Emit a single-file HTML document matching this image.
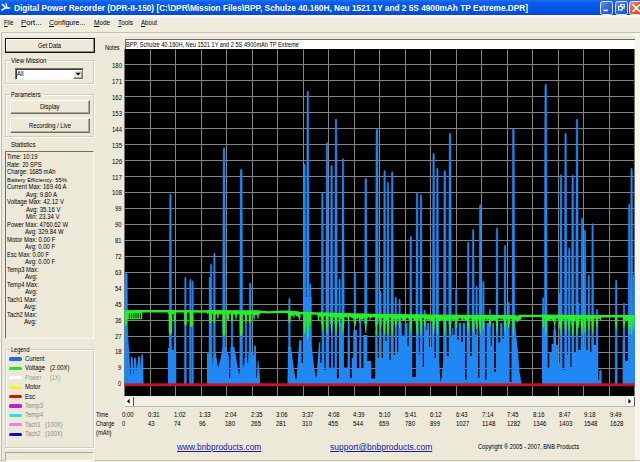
<!DOCTYPE html>
<html><head><meta charset="utf-8"><title>Digital Power Recorder</title>
<style>
html,body{margin:0;padding:0}
body{width:640px;height:462px;overflow:hidden;position:relative;background:#ece9d8;font-family:"Liberation Sans", sans-serif;}
.t{position:absolute;white-space:nowrap;line-height:1;transform-origin:0 50%;}
.abs{position:absolute;box-sizing:border-box}
.grp{position:absolute;box-sizing:border-box;border:1px solid #d0d0bf;box-shadow:inset 1px 1px 0 #fff, 1px 1px 0 #fff;}
.btn{position:absolute;box-sizing:border-box;background:#ece9d8;border:1px solid;border-color:#fff #716f64 #716f64 #fff;box-shadow:inset -1px -1px 0 #aca899;}
.sunk{position:absolute;box-sizing:border-box;border:1px solid;border-color:#716f64 #faf9f3 #faf9f3 #716f64;}
.lbl{background:#ece9d8;}

</style></head><body>
<div class="abs" style="left:0;top:0;width:640px;height:15.5px;background:linear-gradient(#2270f0 0%,#0a5ceb 18%,#0354e6 60%,#0350dc 82%,#0344c4 100%);"></div>
<svg class="abs" style="left:0;top:0" width="14" height="15" viewBox="0 0 14 15"><path d="M2.3 4.4 L5.8 7.7 M2 10 L5.8 7.7 L9.8 7.9 M6 3.8 L7 7.6" stroke="#fff" stroke-width="1.5" fill="none" stroke-linecap="round" stroke-linejoin="round"/></svg>
<span class="t" style="left:13.80px;top:4.27px;font-size:8.3px;color:#fff;transform:scaleX(0.9962);font-weight:bold;">Digital Power Recorder (DPR-II-150) [C:\DPR\Mission Files\BPP, Schulze 40.160H, Neu 1521 1Y and 2 5S 4900mAh TP Extreme.DPR]</span>
<div class="abs" style="left:600.3px;top:1.2px;width:13.2px;height:13.8px;border:1px solid #dfe8fb;border-radius:2.5px;background:linear-gradient(135deg,#6a94f0 0%,#3468e0 45%,#2050c8 100%)"></div>
<div class="abs" style="left:614.8px;top:1.2px;width:13.2px;height:13.8px;border:1px solid #dfe8fb;border-radius:2.5px;background:linear-gradient(135deg,#6a94f0 0%,#3468e0 45%,#2050c8 100%)"></div>
<div class="abs" style="left:629.2px;top:1.2px;width:13.2px;height:13.8px;border:1px solid #dfe8fb;border-radius:2.5px;background:linear-gradient(135deg,#ee8a86 0%,#e2603a 45%,#cc4418 100%)"></div>
<svg class="abs" style="left:600px;top:0" width="40" height="15" viewBox="0 0 40 15"><rect x="3.6" y="9.6" width="4.2" height="1.6" fill="#fff"/><rect x="20.6" y="4.6" width="3.6" height="3.4" fill="none" stroke="#fff" stroke-width="1.1"/><rect x="18.6" y="6.6" width="3.6" height="3.4" fill="#2c5ed8" stroke="#fff" stroke-width="1.1"/><path d="M32.6 4.4 L40 11.8 M32.6 11.8 L40 4.4" stroke="#fff" stroke-width="1.7"/></svg>
<div class="abs" style="left:0;top:15.4px;width:640px;height:2.2px;background:#f8f7f2"></div>
<div class="abs" style="left:0;top:17.6px;width:640px;height:14.4px;background:#efecdc"></div>
<div class="abs" style="left:0;top:28px;width:640px;height:1.2px;background:#f4f2e6"></div>
<div class="abs" style="left:0;top:32px;width:640px;height:1px;background:#c6c3b3"></div>
<div class="abs" style="left:0;top:33px;width:640px;height:3px;background:#f3f1e7"></div>
<span class="t" style="left:3.50px;top:19.07px;font-size:7.0px;color:#000;transform:scaleX(0.8421);"><u>F</u>ile</span>
<span class="t" style="left:20.90px;top:19.07px;font-size:7.0px;color:#000;transform:scaleX(1.1023);"><u>P</u>ort...</span>
<span class="t" style="left:49.00px;top:19.07px;font-size:7.0px;color:#000;transform:scaleX(1.0059);"><u>C</u>onfigure...</span>
<span class="t" style="left:93.70px;top:19.07px;font-size:7.0px;color:#000;transform:scaleX(0.9192);"><u>M</u>ode</span>
<span class="t" style="left:118.00px;top:19.07px;font-size:7.0px;color:#000;transform:scaleX(0.9178);"><u>T</u>ools</span>
<span class="t" style="left:141.00px;top:19.07px;font-size:7.0px;color:#000;transform:scaleX(0.8745);"><u>A</u>bout</span>
<div class="abs" style="left:0;top:32px;width:1px;height:430px;background:#f6f5ee"></div>
<div class="abs" style="left:1px;top:33px;width:1px;height:429px;background:#bdbaa9"></div>
<div class="abs" style="left:635px;top:33px;width:5px;height:429px;background:#f6f5ee"></div>
<div class="abs" style="left:0;top:460px;width:640px;height:1px;background:#c4c1b0"></div>
<div class="abs" style="left:0;top:461px;width:640px;height:1px;background:#f4f3ea"></div>
<div class="abs" style="left:5px;top:37.6px;width:89.5px;height:15.4px;border:1.5px solid #111;background:#ece9d8;box-shadow:inset -1px -1px 0 #8f8c7d, inset 1px 1px 0 #fff"></div>
<span class="t" style="left:38.20px;top:42.54px;font-size:6.8px;color:#000;transform:scaleX(0.8455);">Get Data</span>
<div class="grp" style="left:5px;top:60px;width:88.5px;height:24px"></div>
<div class="abs lbl" style="left:10px;top:56px;width:37px;height:9px"></div>
<span class="t" style="left:11.00px;top:57.27px;font-size:7.0px;color:#000;transform:scaleX(0.8718);">View Mission</span>
<div class="sunk" style="left:15px;top:68px;width:69px;height:12px;background:#fff;box-shadow:inset 1px 1px 0 #404040"></div>
<span class="t" style="left:17.20px;top:70.37px;font-size:7.0px;color:#000;transform:scaleX(0.8353);">All</span>
<div class="btn" style="left:73px;top:69.5px;width:10px;height:9.5px"></div>
<svg class="abs" style="left:73px;top:69px" width="10" height="10" viewBox="0 0 10 10"><path d="M2.4 3.8 L7.8 3.8 L5.1 6.6 Z" fill="#000"/></svg>
<div class="grp" style="left:5px;top:94px;width:88.5px;height:42.5px"></div>
<div class="abs lbl" style="left:10px;top:90px;width:32px;height:9px"></div>
<span class="t" style="left:11.00px;top:91.07px;font-size:7.0px;color:#000;transform:scaleX(0.8152);">Parameters</span>
<div class="btn" style="left:10px;top:99.5px;width:80px;height:14px"></div>
<span class="t" style="left:39.80px;top:103.07px;font-size:7.0px;color:#000;transform:scaleX(0.8496);">Display</span>
<div class="btn" style="left:10px;top:118px;width:80px;height:14.5px"></div>
<span class="t" style="left:28.60px;top:121.67px;font-size:7.0px;color:#000;transform:scaleX(0.8301);">Recording / Live</span>
<span class="t" style="left:10.50px;top:141.27px;font-size:7.0px;color:#000;transform:scaleX(0.8745);">Statistics</span>
<div class="sunk" style="left:5px;top:151px;width:89px;height:188px;"></div>
<span class="t" style="left:7.00px;top:153.17px;font-size:7.0px;color:#000;transform:scaleX(0.8310);">Time: 10:19</span>
<span class="t" style="left:7.00px;top:160.68px;font-size:7.0px;color:#000;transform:scaleX(0.8133);">Rate: 20 SPS</span>
<span class="t" style="left:7.00px;top:168.19px;font-size:7.0px;color:#000;transform:scaleX(0.8253);">Charge: 1685 mAh</span>
<span class="t" style="left:7.00px;top:176.55px;font-size:6.0px;color:#000;transform:scaleX(0.9741);">Battery Efficiency: 55%</span>
<span class="t" style="left:7.00px;top:183.21px;font-size:7.0px;color:#000;transform:scaleX(0.8494);">Current Max: 169.46 A</span>
<span class="t" style="left:26.00px;top:190.72px;font-size:7.0px;color:#000;transform:scaleX(0.8687);">Avg: 9.80 A</span>
<span class="t" style="left:7.00px;top:198.23px;font-size:7.0px;color:#000;transform:scaleX(0.8565);">Voltage Max: 42.12 V</span>
<span class="t" style="left:26.00px;top:205.74px;font-size:7.0px;color:#000;transform:scaleX(0.8632);">Avg: 35.16 V</span>
<span class="t" style="left:26.00px;top:213.25px;font-size:7.0px;color:#000;transform:scaleX(0.8521);">Min: 23.34 V</span>
<span class="t" style="left:7.00px;top:220.76px;font-size:7.0px;color:#000;transform:scaleX(0.8383);">Power Max: 4760.62 W</span>
<span class="t" style="left:25.00px;top:228.27px;font-size:7.0px;color:#000;transform:scaleX(0.8407);">Avg: 329.84 W</span>
<span class="t" style="left:7.00px;top:235.78px;font-size:7.0px;color:#000;transform:scaleX(0.8539);">Motor Max: 0.00 F</span>
<span class="t" style="left:25.00px;top:243.29px;font-size:7.0px;color:#000;transform:scaleX(0.8410);">Avg: 0.00 F</span>
<span class="t" style="left:7.00px;top:250.80px;font-size:7.0px;color:#000;transform:scaleX(0.8304);">Esc Max: 0.00 F</span>
<span class="t" style="left:25.00px;top:258.31px;font-size:7.0px;color:#000;transform:scaleX(0.8410);">Avg: 0.00 F</span>
<span class="t" style="left:7.00px;top:265.82px;font-size:7.0px;color:#000;transform:scaleX(0.8262);">Temp3 Max:</span>
<span class="t" style="left:25.00px;top:273.33px;font-size:7.0px;color:#000;transform:scaleX(0.8999);">Avg:</span>
<span class="t" style="left:7.00px;top:280.84px;font-size:7.0px;color:#000;transform:scaleX(0.8262);">Temp4 Max:</span>
<span class="t" style="left:25.00px;top:288.35px;font-size:7.0px;color:#000;transform:scaleX(0.8999);">Avg:</span>
<span class="t" style="left:7.00px;top:295.86px;font-size:7.0px;color:#000;transform:scaleX(0.8381);">Tach1 Max:</span>
<span class="t" style="left:23.50px;top:303.37px;font-size:7.0px;color:#000;transform:scaleX(0.8999);">Avg:</span>
<span class="t" style="left:7.00px;top:310.88px;font-size:7.0px;color:#000;transform:scaleX(0.8381);">Tach2 Max:</span>
<span class="t" style="left:23.50px;top:318.39px;font-size:7.0px;color:#000;transform:scaleX(0.8999);">Avg:</span>
<div class="grp" style="left:5px;top:348.5px;width:88.5px;height:99px"></div>
<div class="abs lbl" style="left:10px;top:344px;width:20px;height:9px"></div>
<span class="t" style="left:11.00px;top:345.67px;font-size:7.0px;color:#000;transform:scaleX(0.7920);">Legend</span>
<div class="abs" style="left:9px;top:357.40px;width:13px;height:3.2px;border-radius:1.6px;background:#2668e4"></div>
<span class="t" style="left:25.00px;top:354.97px;font-size:7.0px;color:#000;transform:scaleX(0.8353);">Current</span>
<div class="abs" style="left:9px;top:366.79px;width:13px;height:3.2px;border-radius:1.6px;background:#22e222"></div>
<span class="t" style="left:25.00px;top:364.36px;font-size:7.0px;color:#000;transform:scaleX(0.8562);">Voltage</span>
<span class="t" style="left:50.00px;top:364.36px;font-size:7.0px;color:#000;transform:scaleX(0.8490);">(2.00X)</span>
<div class="abs" style="left:9px;top:376.18px;width:13px;height:3.2px;border-radius:1.6px;background:#ffffff"></div>
<span class="t" style="left:25.00px;top:373.75px;font-size:7.0px;color:#9a9a92;transform:scaleX(0.8315);">Power</span>
<span class="t" style="left:50.00px;top:373.75px;font-size:7.0px;color:#9a9a92;transform:scaleX(0.7934);">(1X)</span>
<div class="abs" style="left:9px;top:385.57px;width:13px;height:3.2px;border-radius:1.6px;background:#f6f620"></div>
<span class="t" style="left:25.00px;top:383.14px;font-size:7.0px;color:#000;transform:scaleX(0.8656);">Motor</span>
<div class="abs" style="left:9px;top:394.96px;width:13px;height:3.2px;border-radius:1.6px;background:#cc1408"></div>
<span class="t" style="left:25.00px;top:392.53px;font-size:7.0px;color:#000;transform:scaleX(0.8568);">Esc</span>
<div class="abs" style="left:9px;top:404.35px;width:13px;height:3.2px;border-radius:1.6px;background:#c41adc"></div>
<span class="t" style="left:25.00px;top:401.92px;font-size:7.0px;color:#8a8a84;transform:scaleX(0.8565);">Temp3</span>
<div class="abs" style="left:9px;top:413.74px;width:13px;height:3.2px;border-radius:1.6px;background:#1ee6e6"></div>
<span class="t" style="left:25.00px;top:411.31px;font-size:7.0px;color:#8a8a84;transform:scaleX(0.8565);">Temp4</span>
<div class="abs" style="left:9px;top:423.13px;width:13px;height:3.2px;border-radius:1.6px;background:#f07ee4"></div>
<span class="t" style="left:25.00px;top:420.70px;font-size:7.0px;color:#8a8a84;transform:scaleX(0.8294);">Tach1</span>
<span class="t" style="left:45.00px;top:420.70px;font-size:7.0px;color:#8a8a84;transform:scaleX(0.8327);">(100X)</span>
<div class="abs" style="left:9px;top:432.52px;width:13px;height:3.2px;border-radius:1.6px;background:#0c0cc4"></div>
<span class="t" style="left:25.00px;top:430.09px;font-size:7.0px;color:#8a8a84;transform:scaleX(0.8294);">Tach2</span>
<span class="t" style="left:45.00px;top:430.09px;font-size:7.0px;color:#8a8a84;transform:scaleX(0.8327);">(100X)</span>
<div class="sunk" style="left:5px;top:452px;width:89px;height:8.5px;border-color:#a8a595 #fff #fff #a8a595"></div>
<span class="t" style="left:104.50px;top:44.37px;font-size:7.0px;color:#000;transform:scaleX(0.7925);">Notes</span>
<div class="abs" style="left:124.5px;top:38.5px;width:510.5px;height:11px;background:#fff;border-top:1px solid #6d6b60;border-left:1px solid #6d6b60"></div>
<span class="t" style="left:126.00px;top:41.61px;font-size:6.6px;color:#000;transform:scaleX(0.8524);">BPP, Schulze 40.160H, Neu 1521 1Y and 2 5S 4900mAh TP Extreme</span>
<span class="t" style="left:111.60px;top:62.17px;font-size:7.0px;color:#000;transform:scaleX(0.8556);">180</span>
<span class="t" style="left:111.60px;top:78.08px;font-size:7.0px;color:#000;transform:scaleX(0.8556);">171</span>
<span class="t" style="left:111.60px;top:93.98px;font-size:7.0px;color:#000;transform:scaleX(0.8556);">162</span>
<span class="t" style="left:111.60px;top:109.89px;font-size:7.0px;color:#000;transform:scaleX(0.8556);">153</span>
<span class="t" style="left:111.60px;top:125.79px;font-size:7.0px;color:#000;transform:scaleX(0.8556);">144</span>
<span class="t" style="left:111.60px;top:141.70px;font-size:7.0px;color:#000;transform:scaleX(0.8556);">135</span>
<span class="t" style="left:111.60px;top:157.60px;font-size:7.0px;color:#000;transform:scaleX(0.8556);">126</span>
<span class="t" style="left:111.60px;top:173.51px;font-size:7.0px;color:#000;transform:scaleX(0.8951);">117</span>
<span class="t" style="left:111.60px;top:189.41px;font-size:7.0px;color:#000;transform:scaleX(0.8556);">108</span>
<span class="t" style="left:115.00px;top:205.32px;font-size:7.0px;color:#000;transform:scaleX(0.8465);">99</span>
<span class="t" style="left:115.00px;top:221.22px;font-size:7.0px;color:#000;transform:scaleX(0.8465);">90</span>
<span class="t" style="left:115.00px;top:237.13px;font-size:7.0px;color:#000;transform:scaleX(0.8465);">81</span>
<span class="t" style="left:115.00px;top:253.03px;font-size:7.0px;color:#000;transform:scaleX(0.8465);">72</span>
<span class="t" style="left:115.00px;top:268.94px;font-size:7.0px;color:#000;transform:scaleX(0.8465);">63</span>
<span class="t" style="left:115.00px;top:284.84px;font-size:7.0px;color:#000;transform:scaleX(0.8465);">54</span>
<span class="t" style="left:115.00px;top:300.75px;font-size:7.0px;color:#000;transform:scaleX(0.8465);">45</span>
<span class="t" style="left:115.00px;top:316.65px;font-size:7.0px;color:#000;transform:scaleX(0.8465);">36</span>
<span class="t" style="left:115.00px;top:332.56px;font-size:7.0px;color:#000;transform:scaleX(0.8465);">27</span>
<span class="t" style="left:115.00px;top:348.46px;font-size:7.0px;color:#000;transform:scaleX(0.8465);">18</span>
<span class="t" style="left:118.40px;top:364.37px;font-size:7.0px;color:#000;transform:scaleX(0.8192);">9</span>
<span class="t" style="left:118.40px;top:380.27px;font-size:7.0px;color:#000;transform:scaleX(0.8192);">0</span>
<svg class="abs" style="left:0;top:0" width="640" height="462" viewBox="0 0 640 462"><rect x="124.5" y="49.0" width="510.0" height="347.0" fill="#000"/><path d="M150.50 49.5V396.0M175.50 49.5V396.0M201.50 49.5V396.0M226.50 49.5V396.0M252.50 49.5V396.0M277.50 49.5V396.0M303.50 49.5V396.0M328.50 49.5V396.0M354.50 49.5V396.0M379.50 49.5V396.0M405.50 49.5V396.0M430.50 49.5V396.0M456.50 49.5V396.0M481.50 49.5V396.0M507.50 49.5V396.0M532.50 49.5V396.0M558.50 49.5V396.0M583.50 49.5V396.0M609.50 49.5V396.0M124.5 64.50H634.5M124.5 80.50H634.5M124.5 96.50H634.5M124.5 112.50H634.5M124.5 128.50H634.5M124.5 144.50H634.5M124.5 160.50H634.5M124.5 176.50H634.5M124.5 192.50H634.5M124.5 208.50H634.5M124.5 224.50H634.5M124.5 240.50H634.5M124.5 256.50H634.5M124.5 272.50H634.5M124.5 288.50H634.5M124.5 304.50H634.5M124.5 320.50H634.5M124.5 336.50H634.5M124.5 352.50H634.5M124.5 368.50H634.5" stroke="#848484" stroke-width="1" fill="none"/><path d="M127.4 384.5L127.4 322.0L128.2 338.0L129.2 352.0L130.0 366.0L130.5 377.0L131.0 358.0L131.4 356.6L132.4 356.6L132.8 360.0L133.4 376.0L134.0 360.0L134.4 357.4L135.6 357.4L136.0 360.0L136.9 370.7L137.8 360.0L138.2 356.6L139.9 356.6L140.3 360.0L140.7 369.0L141.1 358.0L141.5 354.3L142.8 354.3L143.2 360.0L143.5 384.0L143.5 384.5Z" fill="#2088f4"/><path d="M168.0 384.5L168.0 384.0L168.0 347.6L172.4 350.0L174.2 350.0L176.1 350.0L176.3 384.0L176.3 384.5Z" fill="#2088f4"/><path d="M207.0 384.5L207.0 384.0L207.0 353.5L209.4 353.5L212.5 358.0L212.9 366.0L213.3 358.0L215.6 352.0L218.0 367.5L220.3 360.0L222.7 347.0L225.8 347.0L228.9 356.6L229.2 378.0L230.2 378.0L230.5 347.0L233.6 347.0L234.4 347.0L238.3 370.7L239.4 375.0L239.8 372.0L243.0 364.0L244.1 367.5L244.5 358.0L246.9 358.0L247.3 363.0L248.1 363.0L248.4 352.0L251.6 352.0L253.9 355.0L253.9 345.7L255.9 345.7L256.3 378.0L256.9 378.0L257.6 361.0L258.4 360.5L259.6 372.0L260.2 384.0L260.2 384.5Z" fill="#2088f4"/><path d="M287.5 384.5L287.5 384.0L288.0 347.0L291.0 347.0L293.2 364.0L295.3 378.5L296.5 379.0L299.2 341.0L300.0 339.4L301.6 341.0L301.6 363.0L303.3 363.0L303.4 297.0L311.6 297.0L311.7 345.0L314.0 366.0L316.0 378.0L317.2 372.0L317.2 366.0L319.0 343.0L320.3 341.0L320.3 363.0L321.6 363.0L321.6 323.0L324.2 323.0L324.4 370.0L325.6 370.0L325.8 323.0L329.1 323.0L329.1 367.5L331.1 367.5L331.1 323.0L332.8 323.0L332.9 367.5L334.6 367.5L334.7 323.0L336.9 323.0L336.9 378.5L338.9 378.0L338.9 323.0L343.9 323.0L343.9 367.5L347.8 367.5L347.8 340.0L349.7 340.0L349.7 378.0L351.7 378.0L351.7 358.0L353.3 358.0L353.3 330.0L356.9 330.0L356.9 369.0L359.5 369.0L359.5 340.0L361.1 340.0L361.1 369.0L363.4 369.0L363.4 335.0L367.3 335.0L367.3 361.0L371.3 361.0L371.3 378.5L375.2 378.5L375.2 330.0L377.7 330.0L377.8 358.0L379.0 358.0L379.1 323.0L381.6 323.0L381.7 358.0L382.9 358.0L383.0 323.0L385.5 323.0L385.6 341.0L386.8 341.0L386.9 323.0L389.4 323.0L389.5 360.0L390.7 360.0L390.8 323.0L393.7 323.0L393.8 355.0L395.0 355.0L395.1 323.0L396.9 323.0L397.0 353.5L398.2 353.5L398.3 323.0L401.8 323.0L401.8 335.5L404.5 335.5L404.5 323.0L407.5 323.0L407.6 346.0L408.7 346.0L408.8 323.0L412.3 323.0L412.3 377.0L415.8 377.0L415.8 323.0L418.8 323.0L418.9 355.0L420.0 355.0L420.1 323.0L422.7 323.0L422.8 367.0L423.9 367.0L424.0 323.0L426.4 323.0L426.4 330.0L427.2 330.0L427.2 323.0L429.1 323.0L429.1 347.0L431.5 347.0L431.5 323.0L434.5 323.0L434.6 358.0L435.8 358.0L435.9 323.0L439.3 323.0L439.3 360.0L440.3 382.0L441.5 378.0L443.2 362.0L443.2 323.0L446.7 323.0L446.8 356.0L448.6 356.0L448.7 323.0L451.0 323.0L451.0 335.5L452.2 335.5L452.2 328.0L453.3 328.0L453.3 335.0L454.5 335.0L454.5 323.0L457.2 323.0L457.2 339.5L458.8 339.5L458.8 323.0L461.2 323.0L461.2 342.0L462.7 342.0L462.7 323.0L465.0 323.0L465.1 380.0L466.5 380.0L466.6 323.0L470.1 323.0L470.2 356.0L471.6 356.0L471.7 323.0L475.0 323.0L475.1 335.0L476.3 335.0L476.4 323.0L478.0 323.0L478.1 378.0L479.4 378.0L479.5 323.0L485.0 323.0L485.1 380.0L486.4 380.0L486.5 323.0L490.7 323.0L490.8 345.7L492.0 345.7L492.1 323.0L494.0 323.0L494.1 372.0L495.8 372.0L495.9 323.0L498.3 323.0L498.3 342.5L500.2 342.5L500.2 323.0L502.5 323.0L502.6 339.0L503.7 339.0L503.8 323.0L509.6 323.0L509.7 382.0L511.4 382.0L511.5 323.0L515.0 323.0L516.2 335.0L518.0 352.0L519.5 372.0L521.5 383.0L521.5 384.0L521.5 384.5Z" fill="#2088f4"/><path d="M542.0 384.5L542.0 384.0L542.0 323.0L547.7 323.0L547.7 367.5L549.3 367.5L549.3 352.0L551.6 352.0L551.6 344.0L553.5 344.0L553.5 330.0L556.0 330.0L556.0 345.0L557.9 345.0L557.9 363.0L559.5 363.0L559.5 323.0L562.4 323.0L562.6 370.0L564.2 370.0L564.3 323.0L566.8 323.0L567.0 355.0L568.0 355.0L568.1 323.0L570.2 323.0L570.4 367.0L571.5 367.0L571.6 323.0L574.0 323.0L574.1 352.0L575.6 352.0L575.7 323.0L578.3 323.0L578.4 350.0L580.6 350.0L580.8 323.0L582.8 323.0L582.9 345.0L584.1 345.0L584.2 323.0L586.2 323.0L586.3 350.0L587.5 350.0L587.6 323.0L590.0 323.0L590.1 352.0L591.3 352.0L591.4 323.0L593.8 323.0L593.9 345.0L595.8 345.0L595.9 323.0L598.1 323.0L598.3 380.0L599.3 380.0L599.4 371.0L600.9 371.0L601.3 384.0L601.3 384.5Z" fill="#2088f4"/><path d="M622.7 384.5L622.7 384.0L622.7 340.0L625.0 340.0L625.0 361.0L628.2 361.0L628.2 323.0L634.5 323.0L634.5 384.0L634.5 384.5Z" fill="#2088f4"/><path d="M124.15 384.5L124.15 384.5L124.55 274.6L125.85 272.5L126.55 272.5L127.85 274.6L128.25 384.5L128.25 384.5ZM168.65 384.5L168.65 334.0L169.15 195.6L170.05 193.5L170.75 193.5L171.65 195.6L172.15 334.0L172.15 384.5ZM173.39 384.5L173.39 384.5L173.60 320.6L174.45 318.5L175.15 318.5L176.00 320.6L176.21 384.5L176.21 384.5ZM183.85 384.5L183.85 384.5L184.20 278.6L185.05 276.5L185.75 276.5L186.60 278.6L186.95 384.5L186.95 384.5ZM188.94 384.5L188.94 384.5L189.20 280.6L190.05 278.5L190.75 278.5L191.60 280.6L191.86 384.5L191.86 384.5ZM191.22 384.5L191.22 384.5L191.40 282.6L192.25 280.5L192.95 280.5L193.80 282.6L193.98 384.5L193.98 384.5ZM208.41 384.5L208.41 384.5L208.60 278.6L209.45 276.5L210.15 276.5L211.00 278.6L211.19 384.5L211.19 384.5ZM209.58 384.5L209.58 384.5L209.80 265.6L210.65 263.5L211.35 263.5L212.20 265.6L212.42 384.5L212.42 384.5ZM212.87 384.5L212.87 384.5L213.20 254.6L214.05 252.5L214.75 252.5L215.60 254.6L215.93 384.5L215.93 384.5ZM222.15 384.5L222.15 287.6L222.65 149.2L223.65 147.1L224.35 147.1L225.35 149.2L225.85 287.6L225.85 384.5ZM230.60 384.5L230.60 384.5L230.80 323.6L231.65 321.5L232.35 321.5L233.20 323.6L233.40 384.5L233.40 384.5ZM239.25 384.5L239.25 309.0L239.75 170.6L240.85 168.5L241.55 168.5L242.65 170.6L243.15 309.0L243.15 384.5ZM244.60 384.5L244.60 384.5L244.80 323.6L245.65 321.5L246.35 321.5L247.20 323.6L247.40 384.5L247.40 384.5ZM248.49 384.5L248.49 384.5L248.85 284.6L249.85 282.5L250.55 282.5L251.55 284.6L251.91 384.5L251.91 384.5ZM287.84 384.5L287.84 384.5L288.15 299.6L289.05 297.5L289.75 297.5L290.65 299.6L290.96 384.5L290.96 384.5ZM302.85 384.5L302.85 304.0L303.35 165.6L304.25 163.5L304.95 163.5L305.85 165.6L306.35 304.0L306.35 384.5ZM306.05 384.5L306.05 231.0L306.55 92.6L307.45 90.5L308.15 90.5L309.05 92.6L309.55 231.0L309.55 384.5ZM308.75 384.5L308.75 384.5L309.00 285.2L309.85 283.1L310.55 283.1L311.40 285.2L311.65 384.5L311.65 384.5ZM320.68 324L320.68 324.0L321.15 194.0L322.05 191.9L322.75 191.9L323.65 194.0L324.12 324.0L324.12 324ZM325.25 324L325.25 282.4L325.75 144.0L326.65 141.9L327.35 141.9L328.25 144.0L328.75 282.4L328.75 324ZM329.85 324L329.85 305.0L330.35 166.6L331.25 164.5L331.95 164.5L332.85 166.6L333.35 305.0L333.35 324ZM334.25 324L334.25 259.0L334.75 120.6L335.65 118.5L336.35 118.5L337.25 120.6L337.75 259.0L337.75 324ZM338.29 324L338.29 324.0L338.40 280.6L339.25 278.5L339.95 278.5L340.80 280.6L340.91 324.0L340.91 324ZM341.25 324L341.25 298.4L341.75 160.0L342.65 157.9L343.35 157.9L344.25 160.0L344.75 298.4L344.75 324ZM347.39 384.5L347.39 384.5L347.50 323.6L348.35 321.5L349.05 321.5L349.90 323.6L350.01 384.5L350.01 384.5ZM353.56 324L353.56 324.0L353.75 273.6L354.65 271.5L355.35 271.5L356.25 273.6L356.44 324.0L356.44 324ZM359.03 384.5L359.03 384.5L359.10 321.6L359.95 319.5L360.65 319.5L361.50 321.6L361.57 384.5L361.57 384.5ZM363.95 324L363.95 318.0L364.45 179.6L365.45 177.5L366.15 177.5L367.15 179.6L367.65 318.0L367.65 324ZM375.00 324L375.00 269.0L375.50 130.6L376.55 128.5L377.25 128.5L378.30 130.6L378.80 269.0L378.80 324ZM379.32 324L379.32 324.0L379.40 292.6L380.25 290.5L380.95 290.5L381.80 292.6L381.88 324.0L381.88 324ZM382.85 324L382.85 310.4L383.35 172.0L384.25 169.9L384.95 169.9L385.85 172.0L386.35 310.4L386.35 324ZM386.35 324L386.35 322.0L386.80 183.6L387.65 181.5L388.35 181.5L389.20 183.6L389.65 322.0L389.65 324ZM390.45 324L390.45 311.6L390.95 173.2L391.85 171.1L392.55 171.1L393.45 173.2L393.95 311.6L393.95 324ZM394.51 324L394.51 324.0L394.60 298.6L395.45 296.5L396.15 296.5L397.00 298.6L397.09 324.0L397.09 324ZM398.32 324L398.32 324.0L398.40 300.6L399.25 298.5L399.95 298.5L400.80 300.6L400.88 324.0L400.88 324ZM409.24 324L409.24 324.0L409.55 237.6L410.45 235.5L411.15 235.5L412.05 237.6L412.36 324.0L412.36 324ZM415.28 324L415.28 324.0L415.75 194.0L416.65 191.9L417.35 191.9L418.25 194.0L418.72 324.0L418.72 324ZM419.29 324L419.29 324.0L419.75 196.0L420.65 193.9L421.35 193.9L422.25 196.0L422.71 324.0L422.71 324ZM423.56 324L423.56 324.0L423.60 311.6L424.45 309.5L425.15 309.5L426.00 311.6L426.05 324.0L426.05 324ZM431.85 324L431.85 293.0L432.35 154.6L433.25 152.5L433.95 152.5L434.85 154.6L435.35 293.0L435.35 324ZM435.65 324L435.65 308.0L436.15 169.6L437.05 167.5L437.75 167.5L438.65 169.6L439.15 308.0L439.15 324ZM442.95 324L442.95 310.4L443.45 172.0L444.45 169.9L445.15 169.9L446.15 172.0L446.65 310.4L446.65 324ZM448.15 324L448.15 273.0L448.65 134.6L449.65 132.5L450.35 132.5L451.35 134.6L451.85 273.0L451.85 324ZM454.89 324L454.89 324.0L455.00 290.6L455.85 288.5L456.55 288.5L457.40 290.6L457.51 324.0L457.51 324ZM466.66 324L466.66 324.0L466.95 243.6L467.85 241.5L468.55 241.5L469.45 243.6L469.74 324.0L469.74 324ZM471.61 324L471.61 324.0L471.95 230.6L472.85 228.5L473.55 228.5L474.45 230.6L474.79 324.0L474.79 324ZM475.28 324L475.28 324.0L475.40 287.6L476.25 285.5L476.95 285.5L477.80 287.6L477.92 324.0L477.92 324ZM478.52 324L478.52 324.0L478.95 206.0L479.85 203.9L480.55 203.9L481.45 206.0L481.88 324.0L481.88 324ZM482.00 324L482.00 324.0L482.15 282.6L483.05 280.5L483.75 280.5L484.65 282.6L484.80 324.0L484.80 324ZM488.75 324L488.75 324.0L488.80 310.6L489.65 308.5L490.35 308.5L491.20 310.6L491.25 324.0L491.25 324ZM495.41 324L495.41 324.0L495.75 229.2L496.65 227.1L497.35 227.1L498.25 229.2L498.59 324.0L498.59 324ZM503.47 324L503.47 324.0L503.75 246.6L504.65 244.5L505.35 244.5L506.25 246.6L506.53 324.0L506.53 324ZM507.55 324L507.55 324.0L507.60 303.6L508.45 301.5L509.15 301.5L510.00 303.6L510.06 324.0L510.06 324ZM511.55 324L511.55 268.0L512.05 129.6L513.05 127.5L513.75 127.5L514.75 129.6L515.25 268.0L515.25 324ZM541.95 324L541.95 324.0L542.00 299.1L542.85 297.0L543.55 297.0L544.40 299.1L544.45 324.0L544.45 324ZM543.85 324L543.85 224.0L544.35 85.6L545.35 83.5L546.05 83.5L547.05 85.6L547.55 224.0L547.55 324ZM553.31 384.5L553.31 384.5L553.50 327.0L554.35 324.9L555.05 324.9L555.90 327.0L556.09 384.5L556.09 384.5ZM559.25 324L559.25 314.4L559.75 176.0L560.65 173.9L561.35 173.9L562.25 176.0L562.75 314.4L562.75 324ZM563.85 324L563.85 273.0L564.35 134.6L565.25 132.5L565.95 132.5L566.85 134.6L567.35 273.0L567.35 324ZM567.76 324L567.76 324.0L568.00 249.6L568.85 247.5L569.55 247.5L570.40 249.6L570.64 324.0L570.64 324ZM570.95 324L570.95 315.0L571.45 176.6L572.35 174.5L573.05 174.5L573.95 176.6L574.45 315.0L574.45 324ZM575.25 324L575.25 259.0L575.75 120.6L576.65 118.5L577.35 118.5L578.25 120.6L578.75 259.0L578.75 324ZM580.46 324L580.46 324.0L580.80 219.6L581.65 217.5L582.35 217.5L583.20 219.6L583.54 324.0L583.54 324ZM583.50 324L583.50 324.0L583.80 231.6L584.65 229.5L585.35 229.5L586.20 231.6L586.50 324.0L586.50 324ZM587.44 324L587.44 324.0L587.60 276.6L588.45 274.5L589.15 274.5L590.00 276.6L590.16 324.0L590.16 324ZM591.08 324L591.08 324.0L591.40 225.2L592.25 223.1L592.95 223.1L593.80 225.2L594.12 324.0L594.12 324ZM595.76 324L595.76 324.0L595.80 310.6L596.65 308.5L597.35 308.5L598.20 310.6L598.24 324.0L598.24 324ZM599.39 384.5L599.39 384.5L599.40 371.6L600.25 369.5L600.95 369.5L601.80 371.6L601.81 384.5L601.81 384.5ZM614.58 384.5L614.58 384.5L614.95 281.6L615.85 279.5L616.55 279.5L617.45 281.6L617.82 384.5L617.82 384.5ZM622.54 384.5L622.54 384.5L622.80 304.6L623.65 302.5L624.35 302.5L625.20 304.6L625.46 384.5L625.46 384.5ZM627.55 384.5L627.55 344.0L628.00 205.6L628.85 203.5L629.55 203.5L630.40 205.6L630.85 344.0L630.85 384.5ZM629.85 384.5L629.85 308.0L630.35 169.6L631.25 167.5L631.95 167.5L632.85 169.6L633.35 308.0L633.35 384.5ZM632.65 384.5L632.65 384.5L632.65 276.6L633.45 274.5L634.15 274.5L634.95 276.6L634.95 384.5L634.95 384.5ZM558.15 324L558.15 324.0L558.15 294.6L558.95 292.5L559.65 292.5L560.45 294.6L560.45 324.0L560.45 324ZM577.65 324L577.65 324.0L577.65 304.6L578.35 302.5L579.05 302.5L579.75 304.6L579.75 324.0L579.75 324Z" fill="#2088f4" opacity="0.42"/><path d="M124.65 384.5L124.65 384.5L125.05 274.6L125.85 273.0L126.55 273.0L127.35 274.6L127.75 384.5L127.75 384.5ZM169.15 384.5L169.15 334.0L169.65 195.6L170.05 194.0L170.75 194.0L171.15 195.6L171.65 334.0L171.65 384.5ZM173.89 384.5L173.89 384.5L174.10 320.6L174.45 319.0L175.15 319.0L175.50 320.6L175.71 384.5L175.71 384.5ZM184.35 384.5L184.35 384.5L184.70 278.6L185.05 277.0L185.75 277.0L186.10 278.6L186.45 384.5L186.45 384.5ZM189.44 384.5L189.44 384.5L189.70 280.6L190.05 279.0L190.75 279.0L191.10 280.6L191.36 384.5L191.36 384.5ZM191.72 384.5L191.72 384.5L191.90 282.6L192.25 281.0L192.95 281.0L193.30 282.6L193.48 384.5L193.48 384.5ZM208.91 384.5L208.91 384.5L209.10 278.6L209.45 277.0L210.15 277.0L210.50 278.6L210.69 384.5L210.69 384.5ZM210.08 384.5L210.08 384.5L210.30 265.6L210.65 264.0L211.35 264.0L211.70 265.6L211.92 384.5L211.92 384.5ZM213.37 384.5L213.37 384.5L213.70 254.6L214.05 253.0L214.75 253.0L215.10 254.6L215.43 384.5L215.43 384.5ZM222.65 384.5L222.65 287.6L223.15 149.2L223.65 147.6L224.35 147.6L224.85 149.2L225.35 287.6L225.35 384.5ZM231.10 384.5L231.10 384.5L231.30 323.6L231.65 322.0L232.35 322.0L232.70 323.6L232.90 384.5L232.90 384.5ZM239.75 384.5L239.75 309.0L240.25 170.6L240.85 169.0L241.55 169.0L242.15 170.6L242.65 309.0L242.65 384.5ZM245.10 384.5L245.10 384.5L245.30 323.6L245.65 322.0L246.35 322.0L246.70 323.6L246.90 384.5L246.90 384.5ZM248.99 384.5L248.99 384.5L249.35 284.6L249.85 283.0L250.55 283.0L251.05 284.6L251.41 384.5L251.41 384.5ZM288.34 384.5L288.34 384.5L288.65 299.6L289.05 298.0L289.75 298.0L290.15 299.6L290.46 384.5L290.46 384.5ZM303.35 384.5L303.35 304.0L303.85 165.6L304.25 164.0L304.95 164.0L305.35 165.6L305.85 304.0L305.85 384.5ZM306.55 384.5L306.55 231.0L307.05 92.6L307.45 91.0L308.15 91.0L308.55 92.6L309.05 231.0L309.05 384.5ZM309.25 384.5L309.25 384.5L309.50 285.2L309.85 283.6L310.55 283.6L310.90 285.2L311.15 384.5L311.15 384.5ZM321.18 324L321.18 324.0L321.65 194.0L322.05 192.4L322.75 192.4L323.15 194.0L323.62 324.0L323.62 324ZM325.75 324L325.75 282.4L326.25 144.0L326.65 142.4L327.35 142.4L327.75 144.0L328.25 282.4L328.25 324ZM330.35 324L330.35 305.0L330.85 166.6L331.25 165.0L331.95 165.0L332.35 166.6L332.85 305.0L332.85 324ZM334.75 324L334.75 259.0L335.25 120.6L335.65 119.0L336.35 119.0L336.75 120.6L337.25 259.0L337.25 324ZM338.79 324L338.79 324.0L338.90 280.6L339.25 279.0L339.95 279.0L340.30 280.6L340.41 324.0L340.41 324ZM341.75 324L341.75 298.4L342.25 160.0L342.65 158.4L343.35 158.4L343.75 160.0L344.25 298.4L344.25 324ZM347.89 384.5L347.89 384.5L348.00 323.6L348.35 322.0L349.05 322.0L349.40 323.6L349.51 384.5L349.51 384.5ZM354.06 324L354.06 324.0L354.25 273.6L354.65 272.0L355.35 272.0L355.75 273.6L355.94 324.0L355.94 324ZM359.53 384.5L359.53 384.5L359.60 321.6L359.95 320.0L360.65 320.0L361.00 321.6L361.07 384.5L361.07 384.5ZM364.45 324L364.45 318.0L364.95 179.6L365.45 178.0L366.15 178.0L366.65 179.6L367.15 318.0L367.15 324ZM375.50 324L375.50 269.0L376.00 130.6L376.55 129.0L377.25 129.0L377.80 130.6L378.30 269.0L378.30 324ZM379.82 324L379.82 324.0L379.90 292.6L380.25 291.0L380.95 291.0L381.30 292.6L381.38 324.0L381.38 324ZM383.35 324L383.35 310.4L383.85 172.0L384.25 170.4L384.95 170.4L385.35 172.0L385.85 310.4L385.85 324ZM386.85 324L386.85 322.0L387.30 183.6L387.65 182.0L388.35 182.0L388.70 183.6L389.15 322.0L389.15 324ZM390.95 324L390.95 311.6L391.45 173.2L391.85 171.6L392.55 171.6L392.95 173.2L393.45 311.6L393.45 324ZM395.01 324L395.01 324.0L395.10 298.6L395.45 297.0L396.15 297.0L396.50 298.6L396.59 324.0L396.59 324ZM398.82 324L398.82 324.0L398.90 300.6L399.25 299.0L399.95 299.0L400.30 300.6L400.38 324.0L400.38 324ZM409.74 324L409.74 324.0L410.05 237.6L410.45 236.0L411.15 236.0L411.55 237.6L411.86 324.0L411.86 324ZM415.78 324L415.78 324.0L416.25 194.0L416.65 192.4L417.35 192.4L417.75 194.0L418.22 324.0L418.22 324ZM419.79 324L419.79 324.0L420.25 196.0L420.65 194.4L421.35 194.4L421.75 196.0L422.21 324.0L422.21 324ZM424.06 324L424.06 324.0L424.10 311.6L424.45 310.0L425.15 310.0L425.50 311.6L425.55 324.0L425.55 324ZM432.35 324L432.35 293.0L432.85 154.6L433.25 153.0L433.95 153.0L434.35 154.6L434.85 293.0L434.85 324ZM436.15 324L436.15 308.0L436.65 169.6L437.05 168.0L437.75 168.0L438.15 169.6L438.65 308.0L438.65 324ZM443.45 324L443.45 310.4L443.95 172.0L444.45 170.4L445.15 170.4L445.65 172.0L446.15 310.4L446.15 324ZM448.65 324L448.65 273.0L449.15 134.6L449.65 133.0L450.35 133.0L450.85 134.6L451.35 273.0L451.35 324ZM455.39 324L455.39 324.0L455.50 290.6L455.85 289.0L456.55 289.0L456.90 290.6L457.01 324.0L457.01 324ZM467.16 324L467.16 324.0L467.45 243.6L467.85 242.0L468.55 242.0L468.95 243.6L469.24 324.0L469.24 324ZM472.11 324L472.11 324.0L472.45 230.6L472.85 229.0L473.55 229.0L473.95 230.6L474.29 324.0L474.29 324ZM475.78 324L475.78 324.0L475.90 287.6L476.25 286.0L476.95 286.0L477.30 287.6L477.42 324.0L477.42 324ZM479.02 324L479.02 324.0L479.45 206.0L479.85 204.4L480.55 204.4L480.95 206.0L481.38 324.0L481.38 324ZM482.50 324L482.50 324.0L482.65 282.6L483.05 281.0L483.75 281.0L484.15 282.6L484.30 324.0L484.30 324ZM489.25 324L489.25 324.0L489.30 310.6L489.65 309.0L490.35 309.0L490.70 310.6L490.75 324.0L490.75 324ZM495.91 324L495.91 324.0L496.25 229.2L496.65 227.6L497.35 227.6L497.75 229.2L498.09 324.0L498.09 324ZM503.97 324L503.97 324.0L504.25 246.6L504.65 245.0L505.35 245.0L505.75 246.6L506.03 324.0L506.03 324ZM508.05 324L508.05 324.0L508.10 303.6L508.45 302.0L509.15 302.0L509.50 303.6L509.56 324.0L509.56 324ZM512.05 324L512.05 268.0L512.55 129.6L513.05 128.0L513.75 128.0L514.25 129.6L514.75 268.0L514.75 324ZM542.45 324L542.45 324.0L542.50 299.1L542.85 297.5L543.55 297.5L543.90 299.1L543.95 324.0L543.95 324ZM544.35 324L544.35 224.0L544.85 85.6L545.35 84.0L546.05 84.0L546.55 85.6L547.05 224.0L547.05 324ZM553.81 384.5L553.81 384.5L554.00 327.0L554.35 325.4L555.05 325.4L555.40 327.0L555.59 384.5L555.59 384.5ZM559.75 324L559.75 314.4L560.25 176.0L560.65 174.4L561.35 174.4L561.75 176.0L562.25 314.4L562.25 324ZM564.35 324L564.35 273.0L564.85 134.6L565.25 133.0L565.95 133.0L566.35 134.6L566.85 273.0L566.85 324ZM568.26 324L568.26 324.0L568.50 249.6L568.85 248.0L569.55 248.0L569.90 249.6L570.14 324.0L570.14 324ZM571.45 324L571.45 315.0L571.95 176.6L572.35 175.0L573.05 175.0L573.45 176.6L573.95 315.0L573.95 324ZM575.75 324L575.75 259.0L576.25 120.6L576.65 119.0L577.35 119.0L577.75 120.6L578.25 259.0L578.25 324ZM580.96 324L580.96 324.0L581.30 219.6L581.65 218.0L582.35 218.0L582.70 219.6L583.04 324.0L583.04 324ZM584.00 324L584.00 324.0L584.30 231.6L584.65 230.0L585.35 230.0L585.70 231.6L586.00 324.0L586.00 324ZM587.94 324L587.94 324.0L588.10 276.6L588.45 275.0L589.15 275.0L589.50 276.6L589.66 324.0L589.66 324ZM591.58 324L591.58 324.0L591.90 225.2L592.25 223.6L592.95 223.6L593.30 225.2L593.62 324.0L593.62 324ZM596.26 324L596.26 324.0L596.30 310.6L596.65 309.0L597.35 309.0L597.70 310.6L597.74 324.0L597.74 324ZM599.89 384.5L599.89 384.5L599.90 371.6L600.25 370.0L600.95 370.0L601.30 371.6L601.31 384.5L601.31 384.5ZM615.08 384.5L615.08 384.5L615.45 281.6L615.85 280.0L616.55 280.0L616.95 281.6L617.32 384.5L617.32 384.5ZM623.04 384.5L623.04 384.5L623.30 304.6L623.65 303.0L624.35 303.0L624.70 304.6L624.96 384.5L624.96 384.5ZM628.05 384.5L628.05 344.0L628.50 205.6L628.85 204.0L629.55 204.0L629.90 205.6L630.35 344.0L630.35 384.5ZM630.35 384.5L630.35 308.0L630.85 169.6L631.25 168.0L631.95 168.0L632.35 169.6L632.85 308.0L632.85 384.5ZM633.15 384.5L633.15 384.5L633.15 276.6L633.45 275.0L634.15 275.0L634.45 276.6L634.45 384.5L634.45 384.5ZM558.65 324L558.65 324.0L558.65 294.6L558.95 293.0L559.65 293.0L559.95 294.6L559.95 324.0L559.95 324ZM578.15 324L578.15 324.0L578.15 304.6L578.35 303.0L579.05 303.0L579.25 304.6L579.25 324.0L579.25 324Z" fill="#2088f4"/><path d="M124.5 311.5L128.0 311.4L143.0 311.3L167.0 311.3L260.0 311.7L268.0 312.4L280.0 311.8L287.0 311.8L300.0 313.0L352.0 314.6L380.0 315.2L440.0 316.0L515.0 316.2L517.0 317.2L520.0 316.0L541.0 315.9L600.0 316.3L634.5 316.3" stroke="#26ee2c" stroke-width="2.4" fill="none" stroke-linejoin="round"/><path d="M168.0 310.1L169.0 310.1L170.0 310.1L171.0 310.1L172.0 310.1L173.0 310.1L174.0 310.1L175.0 310.1L176.0 310.1L176.0 313.0L175.0 314.3L174.0 313.1L173.0 313.9L172.0 314.3L171.0 313.1L170.0 314.6L169.0 313.3L168.0 313.7ZM207.0 310.3L208.0 310.3L209.0 310.3L210.0 310.3L211.0 310.3L212.0 310.3L213.0 310.3L214.0 310.3L215.0 310.3L216.0 310.3L217.0 310.3L218.0 310.3L219.0 310.3L220.0 310.3L221.0 310.3L222.0 310.3L223.0 310.3L224.0 310.3L225.0 310.3L226.0 310.4L227.0 310.4L228.0 310.4L229.0 310.4L230.0 310.4L231.0 310.4L232.0 310.4L233.0 310.4L234.0 310.4L235.0 310.4L236.0 310.4L237.0 310.4L238.0 310.4L239.0 310.4L240.0 310.4L241.0 310.4L242.0 310.4L243.0 310.4L244.0 310.4L245.0 310.4L246.0 310.4L247.0 310.4L248.0 310.4L249.0 310.5L250.0 310.5L251.0 310.5L252.0 310.5L253.0 310.5L254.0 310.5L255.0 310.5L256.0 310.5L257.0 310.5L258.0 310.5L259.0 310.5L260.0 310.5L260.0 315.1L259.0 314.1L258.0 315.6L257.0 314.8L256.0 315.3L255.0 315.0L254.0 313.4L253.0 314.5L252.0 313.7L251.0 315.2L250.0 314.3L249.0 313.6L248.0 315.8L247.0 314.0L246.0 315.1L245.0 315.5L244.0 314.6L243.0 314.7L242.0 313.9L241.0 315.0L240.0 315.3L239.0 314.0L238.0 314.4L237.0 314.7L236.0 314.0L235.0 314.3L234.0 315.0L233.0 313.7L232.0 313.3L231.0 313.3L230.0 314.6L229.0 314.1L228.0 314.8L227.0 314.7L226.0 313.6L225.0 315.3L224.0 313.9L223.0 313.4L222.0 313.5L221.0 313.9L220.0 315.4L219.0 313.2L218.0 315.7L217.0 314.1L216.0 314.6L215.0 315.6L214.0 314.7L213.0 313.7L212.0 313.4L211.0 315.2L210.0 314.2L209.0 313.3L208.0 313.3L207.0 314.2ZM288.0 310.7L289.0 310.8L290.0 310.9L291.0 311.0L292.0 311.1L293.0 311.2L294.0 311.2L295.0 311.3L296.0 311.4L297.0 311.5L298.0 311.6L299.0 311.7L299.0 316.6L298.0 317.0L297.0 316.0L296.0 316.1L295.0 314.3L294.0 315.8L293.0 315.2L292.0 316.3L291.0 316.0L290.0 314.9L289.0 315.1L288.0 315.0ZM319.0 312.4L320.0 312.4L321.0 312.4L322.0 312.5L323.0 312.5L324.0 312.5L325.0 312.6L326.0 312.6L327.0 312.6L328.0 312.7L329.0 312.7L330.0 312.7L331.0 312.8L332.0 312.8L333.0 312.8L334.0 312.8L335.0 312.9L336.0 312.9L337.0 312.9L338.0 313.0L339.0 313.0L340.0 313.0L341.0 313.1L342.0 313.1L343.0 313.1L344.0 313.2L345.0 313.2L346.0 313.2L347.0 313.2L348.0 313.3L349.0 313.3L350.0 313.3L351.0 313.4L352.0 313.4L353.0 313.4L354.0 313.4L355.0 313.5L356.0 313.5L357.0 313.5L358.0 313.5L359.0 313.6L360.0 313.6L361.0 313.6L362.0 313.6L363.0 313.6L364.0 313.7L365.0 313.7L366.0 313.7L367.0 313.7L368.0 313.7L369.0 313.8L370.0 313.8L371.0 313.8L372.0 313.8L373.0 313.9L374.0 313.9L375.0 313.9L376.0 313.9L377.0 313.9L378.0 314.0L379.0 314.0L380.0 314.0L381.0 314.0L382.0 314.0L383.0 314.0L384.0 314.1L385.0 314.1L386.0 314.1L387.0 314.1L388.0 314.1L389.0 314.1L390.0 314.1L391.0 314.1L392.0 314.2L393.0 314.2L394.0 314.2L395.0 314.2L396.0 314.2L397.0 314.2L398.0 314.2L399.0 314.3L400.0 314.3L401.0 314.3L402.0 314.3L403.0 314.3L404.0 314.3L405.0 314.3L406.0 314.3L407.0 314.4L408.0 314.4L409.0 314.4L410.0 314.4L411.0 314.4L412.0 314.4L413.0 314.4L414.0 314.5L415.0 314.5L416.0 314.5L417.0 314.5L418.0 314.5L419.0 314.5L420.0 314.5L421.0 314.5L422.0 314.6L423.0 314.6L424.0 314.6L425.0 314.6L426.0 314.6L427.0 314.6L428.0 314.6L429.0 314.7L430.0 314.7L431.0 314.7L432.0 314.7L433.0 314.7L434.0 314.7L435.0 314.7L436.0 314.7L437.0 314.8L438.0 314.8L439.0 314.8L440.0 314.8L441.0 314.8L442.0 314.8L443.0 314.8L444.0 314.8L445.0 314.8L446.0 314.8L447.0 314.8L448.0 314.8L449.0 314.8L450.0 314.8L451.0 314.8L452.0 314.8L453.0 314.8L454.0 314.8L455.0 314.8L456.0 314.8L457.0 314.8L458.0 314.8L459.0 314.9L460.0 314.9L461.0 314.9L462.0 314.9L463.0 314.9L464.0 314.9L465.0 314.9L466.0 314.9L467.0 314.9L468.0 314.9L469.0 314.9L470.0 314.9L471.0 314.9L472.0 314.9L473.0 314.9L474.0 314.9L475.0 314.9L476.0 314.9L477.0 314.9L478.0 314.9L479.0 314.9L480.0 314.9L481.0 314.9L482.0 314.9L483.0 314.9L484.0 314.9L485.0 314.9L486.0 314.9L487.0 314.9L488.0 314.9L489.0 314.9L490.0 314.9L491.0 314.9L492.0 314.9L493.0 314.9L494.0 314.9L495.0 314.9L496.0 314.9L497.0 315.0L498.0 315.0L499.0 315.0L500.0 315.0L501.0 315.0L502.0 315.0L503.0 315.0L504.0 315.0L505.0 315.0L506.0 315.0L507.0 315.0L508.0 315.0L509.0 315.0L510.0 315.0L511.0 315.0L512.0 315.0L513.0 315.0L514.0 315.0L515.0 315.0L516.0 315.5L517.0 316.0L518.0 315.6L519.0 315.2L520.0 314.8L521.0 314.8L521.0 319.6L520.0 320.0L519.0 319.8L518.0 321.9L517.0 321.7L516.0 320.5L515.0 319.8L514.0 320.8L513.0 319.0L512.0 318.9L511.0 320.0L510.0 318.4L509.0 320.8L508.0 320.0L507.0 319.8L506.0 319.1L505.0 320.0L504.0 320.6L503.0 319.7L502.0 318.6L501.0 320.8L500.0 318.0L499.0 318.6L498.0 319.5L497.0 318.0L496.0 319.8L495.0 319.9L494.0 319.7L493.0 321.2L492.0 319.5L491.0 321.2L490.0 320.0L489.0 319.6L488.0 319.2L487.0 321.2L486.0 318.4L485.0 319.4L484.0 318.9L483.0 320.0L482.0 318.8L481.0 319.0L480.0 318.8L479.0 318.7L478.0 320.9L477.0 321.0L476.0 319.5L475.0 321.3L474.0 319.8L473.0 320.2L472.0 321.4L471.0 317.9L470.0 318.4L469.0 319.9L468.0 319.1L467.0 320.2L466.0 321.4L465.0 320.8L464.0 318.4L463.0 320.8L462.0 321.1L461.0 318.4L460.0 318.3L459.0 318.5L458.0 320.5L457.0 321.3L456.0 319.3L455.0 319.3L454.0 321.3L453.0 320.7L452.0 319.0L451.0 320.7L450.0 318.5L449.0 319.5L448.0 320.5L447.0 320.6L446.0 321.1L445.0 320.2L444.0 318.1L443.0 320.7L442.0 320.2L441.0 319.5L440.0 320.8L439.0 321.0L438.0 320.0L437.0 318.5L436.0 318.5L435.0 318.5L434.0 318.5L433.0 319.0L432.0 321.1L431.0 321.2L430.0 321.0L429.0 319.3L428.0 321.1L427.0 320.1L426.0 318.5L425.0 318.6L424.0 317.7L423.0 317.7L422.0 318.8L421.0 319.4L420.0 318.3L419.0 320.2L418.0 320.5L417.0 320.4L416.0 320.5L415.0 321.0L414.0 320.4L413.0 318.2L412.0 318.6L411.0 320.2L410.0 319.3L409.0 320.2L408.0 318.0L407.0 318.7L406.0 318.3L405.0 319.8L404.0 320.4L403.0 320.8L402.0 319.2L401.0 317.4L400.0 319.2L399.0 317.8L398.0 319.1L397.0 320.7L396.0 317.3L395.0 317.8L394.0 320.2L393.0 318.1L392.0 318.4L391.0 317.5L390.0 317.4L389.0 318.9L388.0 318.8L387.0 320.7L386.0 320.1L385.0 317.5L384.0 318.4L383.0 318.3L382.0 317.9L381.0 317.5L380.0 319.2L379.0 320.1L378.0 317.0L377.0 318.2L376.0 317.3L375.0 317.4L374.0 316.9L373.0 317.0L372.0 318.1L371.0 317.4L370.0 317.5L369.0 317.0L368.0 317.0L367.0 319.0L366.0 317.1L365.0 318.1L364.0 318.1L363.0 319.5L362.0 319.8L361.0 319.4L360.0 319.8L359.0 316.7L358.0 319.0L357.0 318.7L356.0 318.3L355.0 319.0L354.0 319.9L353.0 318.5L352.0 317.7L351.0 317.7L350.0 316.4L349.0 317.1L348.0 318.2L347.0 317.8L346.0 317.0L345.0 316.9L344.0 316.7L343.0 316.6L342.0 319.2L341.0 318.9L340.0 317.2L339.0 317.3L338.0 316.9L337.0 318.7L336.0 318.5L335.0 318.7L334.0 317.6L333.0 317.3L332.0 316.0L331.0 318.5L330.0 317.0L329.0 316.5L328.0 316.1L327.0 318.1L326.0 315.8L325.0 315.9L324.0 316.1L323.0 317.0L322.0 315.5L321.0 317.6L320.0 316.6L319.0 316.3ZM542.0 314.7L543.0 314.7L544.0 314.7L545.0 314.7L546.0 314.7L547.0 314.7L548.0 314.7L549.0 314.8L550.0 314.8L551.0 314.8L552.0 314.8L553.0 314.8L554.0 314.8L555.0 314.8L556.0 314.8L557.0 314.8L558.0 314.8L559.0 314.8L560.0 314.8L561.0 314.8L562.0 314.8L563.0 314.8L564.0 314.9L565.0 314.9L566.0 314.9L567.0 314.9L568.0 314.9L569.0 314.9L570.0 314.9L571.0 314.9L572.0 314.9L573.0 314.9L574.0 314.9L575.0 314.9L576.0 314.9L577.0 314.9L578.0 315.0L579.0 315.0L580.0 315.0L581.0 315.0L582.0 315.0L583.0 315.0L584.0 315.0L585.0 315.0L586.0 315.0L587.0 315.0L588.0 315.0L589.0 315.0L590.0 315.0L591.0 315.0L592.0 315.0L593.0 315.1L594.0 315.1L595.0 315.1L596.0 315.1L597.0 315.1L598.0 315.1L599.0 315.1L600.0 315.1L601.0 315.1L601.0 321.4L600.0 319.6L599.0 318.6L598.0 319.1L597.0 320.9L596.0 318.2L595.0 319.0L594.0 318.4L593.0 321.6L592.0 320.9L591.0 321.6L590.0 318.3L589.0 319.9L588.0 320.3L587.0 319.2L586.0 318.1L585.0 319.6L584.0 320.0L583.0 318.1L582.0 320.6L581.0 319.1L580.0 318.7L579.0 319.2L578.0 319.8L577.0 319.5L576.0 318.5L575.0 320.9L574.0 321.5L573.0 319.7L572.0 319.3L571.0 321.3L570.0 318.7L569.0 321.4L568.0 321.1L567.0 318.4L566.0 320.2L565.0 320.4L564.0 318.4L563.0 321.1L562.0 320.7L561.0 320.2L560.0 318.1L559.0 318.7L558.0 318.1L557.0 319.4L556.0 318.2L555.0 318.3L554.0 320.8L553.0 321.2L552.0 319.8L551.0 318.7L550.0 321.2L549.0 320.9L548.0 320.3L547.0 321.1L546.0 319.5L545.0 319.6L544.0 319.3L543.0 320.2L542.0 319.6ZM623.0 315.1L624.0 315.1L625.0 315.1L626.0 315.1L627.0 315.1L628.0 315.1L629.0 315.1L630.0 315.1L631.0 315.1L632.0 315.1L633.0 315.1L634.0 315.1L634.0 321.5L633.0 318.4L632.0 319.6L631.0 320.6L630.0 318.3L629.0 318.4L628.0 320.6L627.0 320.2L626.0 321.4L625.0 318.6L624.0 319.0L623.0 321.0ZM124.60 311.0L127.40 311.0L127.19 323.5L126.42 326.0L125.58 326.0L124.81 323.5ZM168.55 310.8L172.25 310.8L171.97 332.2L170.96 334.7L169.84 334.7L168.83 332.2ZM173.45 310.8L175.75 310.8L175.58 319.5L174.94 322.0L174.25 322.0L173.62 319.5ZM184.05 310.9L186.95 310.9L186.73 323.5L185.94 326.0L185.06 326.0L184.27 323.5ZM189.65 310.9L193.35 310.9L193.07 324.5L192.06 327.0L190.94 327.0L189.93 324.5ZM208.75 311.0L212.05 311.0L211.80 320.5L210.90 323.0L209.91 323.0L209.00 320.5ZM213.25 311.0L215.55 311.0L215.38 320.5L214.75 323.0L214.06 323.0L213.42 320.5ZM217.10 311.0L218.90 311.0L218.76 316.5L218.27 319.0L217.73 319.0L217.24 316.5ZM222.35 311.0L225.65 311.0L225.40 333.5L224.50 336.0L223.50 336.0L222.60 333.5ZM226.85 311.1L229.15 311.1L228.98 318.5L228.34 321.0L227.66 321.0L227.02 318.5ZM230.85 311.1L233.15 311.1L232.98 320.5L232.34 323.0L231.66 323.0L231.02 320.5ZM235.10 311.1L236.90 311.1L236.76 317.5L236.27 320.0L235.73 320.0L235.24 317.5ZM239.55 311.1L242.85 311.1L242.60 333.5L241.69 336.0L240.70 336.0L239.80 333.5ZM244.85 311.1L247.15 311.1L246.98 320.5L246.34 323.0L245.66 323.0L245.02 320.5ZM248.60 311.2L251.40 311.2L251.19 320.5L250.42 323.0L249.58 323.0L248.81 320.5ZM253.10 311.2L254.90 311.2L254.76 317.5L254.27 320.0L253.73 320.0L253.24 317.5ZM257.10 311.2L258.90 311.2L258.76 316.5L258.27 319.0L257.73 319.0L257.24 316.5ZM288.00 311.5L290.80 311.5L290.59 320.5L289.82 323.0L288.98 323.0L288.21 320.5ZM293.10 311.9L294.90 311.9L294.76 315.5L294.27 318.0L293.73 318.0L293.24 315.5ZM298.35 312.5L300.65 312.5L300.48 317.5L299.85 320.0L299.15 320.0L298.52 317.5ZM303.15 312.6L306.05 312.6L305.69 324.4L305.00 334.0L304.20 334.0L303.51 324.4ZM306.25 312.7L309.35 312.7L308.96 327.2L308.20 339.0L307.40 339.0L306.64 327.2ZM309.05 312.8L311.35 312.8L311.06 320.1L310.60 326.0L309.80 326.0L309.34 320.1ZM317.35 313.1L319.65 313.1L319.36 317.4L318.90 321.0L318.10 321.0L317.64 317.4ZM321.05 313.2L323.75 313.2L323.41 323.0L322.80 331.0L322.00 331.0L321.39 323.0ZM325.65 313.3L328.35 313.3L328.01 324.7L327.40 334.0L326.60 334.0L325.99 324.7ZM330.25 313.5L332.95 313.5L332.61 324.2L332.00 333.0L331.20 333.0L330.59 324.2ZM334.65 313.6L337.35 313.6L337.01 325.4L336.40 335.0L335.60 335.0L334.99 325.4ZM338.45 313.7L340.75 313.7L340.46 321.0L340.00 327.0L339.20 327.0L338.74 321.0ZM341.65 313.8L344.35 313.8L344.01 324.4L343.40 333.0L342.60 333.0L341.99 324.4ZM347.25 314.0L349.55 314.0L349.26 318.9L348.80 323.0L348.00 323.0L347.54 318.9ZM353.65 314.2L356.35 314.2L356.01 321.2L355.40 327.0L354.60 327.0L353.99 321.2ZM358.55 314.3L360.85 314.3L360.56 319.1L360.10 323.0L359.30 323.0L358.84 319.1ZM364.45 314.4L367.15 314.4L366.81 324.6L366.20 333.0L365.40 333.0L364.79 324.6ZM369.10 314.5L370.90 314.5L370.68 317.5L370.40 320.0L369.60 320.0L369.32 317.5ZM374.95 314.6L377.85 314.6L377.49 325.8L376.80 335.0L376.00 335.0L375.31 325.8ZM379.35 314.7L381.85 314.7L381.54 321.9L381.00 327.8L380.20 327.8L379.66 321.9ZM383.25 314.8L385.95 314.8L385.61 325.9L385.00 335.0L384.20 335.0L383.59 325.9ZM386.65 314.8L389.35 314.8L389.01 325.9L388.40 335.0L387.60 335.0L386.99 325.9ZM390.85 314.9L393.55 314.9L393.21 325.9L392.60 335.0L391.80 335.0L391.19 325.9ZM394.45 314.9L397.15 314.9L396.81 321.9L396.20 327.5L395.40 327.5L394.79 321.9ZM398.25 315.0L400.95 315.0L400.61 321.8L400.00 327.4L399.20 327.4L398.59 321.8ZM409.45 315.1L412.15 315.1L411.81 324.4L411.20 332.0L410.40 332.0L409.79 324.4ZM415.65 315.2L418.35 315.2L418.01 326.1L417.40 335.0L416.60 335.0L415.99 326.1ZM419.65 315.2L422.35 315.2L422.01 326.1L421.40 335.0L420.60 335.0L419.99 326.1ZM423.45 315.3L426.15 315.3L425.81 321.7L425.20 327.0L424.40 327.0L423.79 321.7ZM432.25 315.4L434.95 315.4L434.61 326.2L434.00 335.0L433.20 335.0L432.59 326.2ZM436.05 315.5L438.75 315.5L438.41 326.2L437.80 335.0L437.00 335.0L436.39 326.2ZM443.45 315.5L446.15 315.5L445.81 326.2L445.20 335.0L444.40 335.0L443.79 326.2ZM448.65 315.5L451.35 315.5L451.01 326.2L450.40 335.0L449.60 335.0L448.99 326.2ZM454.85 315.5L457.55 315.5L457.21 322.8L456.60 328.7L455.80 328.7L455.19 322.8ZM466.85 315.6L469.55 315.6L469.21 324.6L468.60 332.1L467.80 332.1L467.19 324.6ZM471.85 315.6L474.55 315.6L474.21 325.2L473.60 333.0L472.80 333.0L472.19 325.2ZM475.25 315.6L477.95 315.6L477.61 323.0L477.00 329.0L476.20 329.0L475.59 323.0ZM478.85 315.6L481.55 315.6L481.21 326.1L480.60 334.7L479.80 334.7L479.19 326.1ZM482.05 315.6L484.75 315.6L484.41 323.2L483.80 329.4L483.00 329.4L482.39 323.2ZM488.65 315.6L491.35 315.6L491.01 322.1L490.40 327.4L489.60 327.4L488.99 322.1ZM495.65 315.7L498.35 315.7L498.01 325.3L497.40 333.1L496.60 333.1L495.99 325.3ZM503.65 315.7L506.35 315.7L506.01 324.6L505.40 331.9L504.60 331.9L503.99 324.6ZM507.55 315.7L510.05 315.7L509.74 322.4L509.20 328.0L508.40 328.0L507.86 322.4ZM512.05 315.7L514.75 315.7L514.41 326.3L513.80 335.0L513.00 335.0L512.39 326.3ZM542.05 315.4L544.35 315.4L544.06 322.3L543.60 328.0L542.80 328.0L542.34 322.3ZM544.35 315.4L547.05 315.4L546.71 326.2L546.10 335.0L545.30 335.0L544.69 326.2ZM553.35 315.5L556.05 315.5L555.71 321.3L555.10 326.1L554.30 326.1L553.69 321.3ZM559.65 315.5L562.35 315.5L562.01 326.2L561.40 335.0L560.60 335.0L559.99 326.2ZM564.25 315.6L566.95 315.6L566.61 326.3L566.00 335.0L565.20 335.0L564.59 326.3ZM567.85 315.6L570.55 315.6L570.21 324.4L569.60 331.6L568.80 331.6L568.19 324.4ZM571.35 315.6L574.05 315.6L573.71 326.3L573.10 335.0L572.30 335.0L571.69 326.3ZM575.65 315.6L578.35 315.6L578.01 326.3L577.40 335.0L576.60 335.0L575.99 326.3ZM580.65 315.7L583.35 315.7L583.01 325.7L582.40 333.8L581.60 333.8L580.99 325.7ZM583.65 315.7L586.35 315.7L586.01 325.2L585.40 333.0L584.60 333.0L583.99 325.2ZM587.45 315.7L590.15 315.7L589.81 323.5L589.20 329.9L588.40 329.9L587.79 323.5ZM591.25 315.7L593.95 315.7L593.61 325.5L593.00 333.5L592.20 333.5L591.59 325.5ZM595.75 315.8L598.25 315.8L597.94 322.3L597.40 327.6L596.60 327.6L596.06 322.3ZM614.85 315.8L617.55 315.8L617.21 323.4L616.60 329.6L615.80 329.6L615.19 323.4ZM622.65 315.8L625.35 315.8L625.01 322.5L624.40 328.0L623.60 328.0L622.99 322.5ZM627.85 315.8L630.55 315.8L630.21 326.3L629.60 334.9L628.80 334.9L628.19 326.3ZM630.25 315.8L632.95 315.8L632.61 326.4L632.00 335.0L631.20 335.0L630.59 326.4ZM632.95 315.8L634.65 315.8L634.44 323.6L634.20 330.0L633.40 330.0L633.16 323.6ZM558.45 315.5L560.15 315.5L559.94 322.6L559.70 328.4L558.90 328.4L558.66 322.6ZM577.95 315.7L579.45 315.7L579.26 322.4L579.10 327.9L578.30 327.9L578.14 322.4Z" fill="#26ee2c"/><rect x="127" y="310.3" width="15.3" height="8.9" fill="#26ee2c"/><path d="M129.40 313.2V318.2M131.60 313.2V318.2M133.80 313.2V318.2M136.00 313.2V318.2M138.20 313.2V318.2M140.40 313.2V318.2" stroke="#012401" stroke-width="0.95" fill="none"/><rect x="124.5" y="383.3" width="510.0" height="2.9" fill="#c61226"/></svg>
<div class="abs" style="left:124.5px;top:396.5px;width:510px;height:10px;background:#f1f0e6;border-bottom:1px solid #b9b6a6"></div>
<div class="abs" style="left:124.5px;top:396.5px;width:9.3px;height:9px;background:#f7f6f0;border-right:1px solid #55534a"></div>
<div class="abs" style="left:624.5px;top:396.5px;width:10px;height:9px;background:#f7f6f0;border-left:1px solid #d8d5c6;border-right:1px solid #55534a;box-sizing:border-box"></div>
<svg class="abs" style="left:124px;top:396px" width="512" height="10" viewBox="0 0 512 10"><path d="M5.6 2.7 L5.6 7.7 L3.0 5.2 Z M504.4 2.7 L504.4 7.7 L507.2 5.2 Z" fill="#000"/></svg>
<span class="t" style="left:96.20px;top:410.87px;font-size:7.0px;color:#000;transform:scaleX(0.8172);">Time</span>
<span class="t" style="left:96.20px;top:419.97px;font-size:7.0px;color:#000;transform:scaleX(0.8054);">Charge</span>
<span class="t" style="left:96.20px;top:428.67px;font-size:7.0px;color:#000;transform:scaleX(0.8131);">(mAh)</span>
<span class="t" style="left:122.25px;top:410.87px;font-size:7.0px;color:#000;transform:scaleX(0.8440);">0:00</span>
<span class="t" style="left:122.25px;top:419.97px;font-size:7.0px;color:#000;transform:scaleX(0.8192);">0</span>
<span class="t" style="left:147.92px;top:410.87px;font-size:7.0px;color:#000;transform:scaleX(0.8440);">0:31</span>
<span class="t" style="left:147.92px;top:419.97px;font-size:7.0px;color:#000;transform:scaleX(0.8465);">43</span>
<span class="t" style="left:173.59px;top:410.87px;font-size:7.0px;color:#000;transform:scaleX(0.8440);">1:02</span>
<span class="t" style="left:173.59px;top:419.97px;font-size:7.0px;color:#000;transform:scaleX(0.8465);">74</span>
<span class="t" style="left:199.26px;top:410.87px;font-size:7.0px;color:#000;transform:scaleX(0.8440);">1:33</span>
<span class="t" style="left:199.26px;top:419.97px;font-size:7.0px;color:#000;transform:scaleX(0.8465);">96</span>
<span class="t" style="left:224.93px;top:410.87px;font-size:7.0px;color:#000;transform:scaleX(0.8440);">2:04</span>
<span class="t" style="left:224.93px;top:419.97px;font-size:7.0px;color:#000;transform:scaleX(0.8556);">180</span>
<span class="t" style="left:250.60px;top:410.87px;font-size:7.0px;color:#000;transform:scaleX(0.8440);">2:35</span>
<span class="t" style="left:250.60px;top:419.97px;font-size:7.0px;color:#000;transform:scaleX(0.8556);">265</span>
<span class="t" style="left:276.27px;top:410.87px;font-size:7.0px;color:#000;transform:scaleX(0.8440);">3:06</span>
<span class="t" style="left:276.27px;top:419.97px;font-size:7.0px;color:#000;transform:scaleX(0.8556);">281</span>
<span class="t" style="left:301.94px;top:410.87px;font-size:7.0px;color:#000;transform:scaleX(0.8440);">3:37</span>
<span class="t" style="left:301.94px;top:419.97px;font-size:7.0px;color:#000;transform:scaleX(0.8556);">310</span>
<span class="t" style="left:327.61px;top:410.87px;font-size:7.0px;color:#000;transform:scaleX(0.8440);">4:08</span>
<span class="t" style="left:327.61px;top:419.97px;font-size:7.0px;color:#000;transform:scaleX(0.8556);">455</span>
<span class="t" style="left:353.28px;top:410.87px;font-size:7.0px;color:#000;transform:scaleX(0.8440);">4:39</span>
<span class="t" style="left:353.28px;top:419.97px;font-size:7.0px;color:#000;transform:scaleX(0.8556);">544</span>
<span class="t" style="left:378.95px;top:410.87px;font-size:7.0px;color:#000;transform:scaleX(0.8440);">5:10</span>
<span class="t" style="left:378.95px;top:419.97px;font-size:7.0px;color:#000;transform:scaleX(0.8556);">659</span>
<span class="t" style="left:404.62px;top:410.87px;font-size:7.0px;color:#000;transform:scaleX(0.8440);">5:41</span>
<span class="t" style="left:404.62px;top:419.97px;font-size:7.0px;color:#000;transform:scaleX(0.8556);">780</span>
<span class="t" style="left:430.29px;top:410.87px;font-size:7.0px;color:#000;transform:scaleX(0.8440);">6:12</span>
<span class="t" style="left:430.29px;top:419.97px;font-size:7.0px;color:#000;transform:scaleX(0.8556);">899</span>
<span class="t" style="left:455.96px;top:410.87px;font-size:7.0px;color:#000;transform:scaleX(0.8440);">6:43</span>
<span class="t" style="left:455.96px;top:419.97px;font-size:7.0px;color:#000;transform:scaleX(0.8602);">1027</span>
<span class="t" style="left:481.63px;top:410.87px;font-size:7.0px;color:#000;transform:scaleX(0.8440);">7:14</span>
<span class="t" style="left:481.63px;top:419.97px;font-size:7.0px;color:#000;transform:scaleX(0.8896);">1148</span>
<span class="t" style="left:507.30px;top:410.87px;font-size:7.0px;color:#000;transform:scaleX(0.8440);">7:45</span>
<span class="t" style="left:507.30px;top:419.97px;font-size:7.0px;color:#000;transform:scaleX(0.8602);">1282</span>
<span class="t" style="left:532.97px;top:410.87px;font-size:7.0px;color:#000;transform:scaleX(0.8440);">8:16</span>
<span class="t" style="left:532.97px;top:419.97px;font-size:7.0px;color:#000;transform:scaleX(0.8602);">1346</span>
<span class="t" style="left:558.64px;top:410.87px;font-size:7.0px;color:#000;transform:scaleX(0.8440);">8:47</span>
<span class="t" style="left:558.64px;top:419.97px;font-size:7.0px;color:#000;transform:scaleX(0.8602);">1403</span>
<span class="t" style="left:584.31px;top:410.87px;font-size:7.0px;color:#000;transform:scaleX(0.8440);">9:18</span>
<span class="t" style="left:584.31px;top:419.97px;font-size:7.0px;color:#000;transform:scaleX(0.8602);">1548</span>
<span class="t" style="left:609.98px;top:410.87px;font-size:7.0px;color:#000;transform:scaleX(0.8440);">9:49</span>
<span class="t" style="left:609.98px;top:419.97px;font-size:7.0px;color:#000;transform:scaleX(0.8602);">1628</span>
<span class="t" style="left:176.90px;top:443.11px;font-size:9.2px;color:#1818a8;transform:scaleX(0.9120);text-decoration:underline;">www.bnbproducts.com</span>
<span class="t" style="left:329.90px;top:443.11px;font-size:9.2px;color:#1818a8;transform:scaleX(0.9262);text-decoration:underline;">support@bnbproducts.com</span>
<span class="t" style="left:478.00px;top:444.24px;font-size:6.8px;color:#000;transform:scaleX(0.8373);">Copyright ® 2005 - 2007, BNB Products</span>
</body></html>
